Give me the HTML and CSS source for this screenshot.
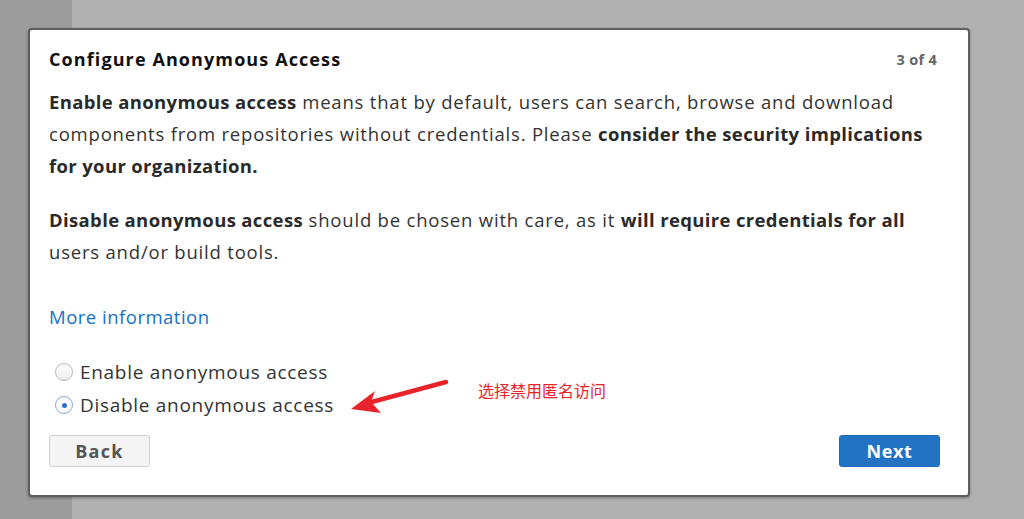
FILE: index.html
```html
<!DOCTYPE html>
<html>
<head>
<meta charset="utf-8">
<link rel="stylesheet" href="styles.css">
</head>
<body>
<div class="backdrop">
  <div class="side"></div>
  <div class="main"></div>
</div>
<div class="dialog">
  <div class="head">
    <h1 class="title">Configure Anonymous Access</h1>
    <span class="step">3 of 4</span>
  </div>
  <p class="para"><b>Enable anonymous access</b> means that by default, users can search, browse and download components from repositories without credentials. Please <b>consider the security implications for your organization.</b></p>
  <p class="para second"><b>Disable anonymous access</b> should be chosen with care, as it <b>will require credentials for all</b> users and/or build tools.</p>
  <a class="more" href="#">More information</a>
  <div class="options">
    <label class="opt"><span class="radio"></span>Enable anonymous access</label>
    <label class="opt"><span class="radio on"></span>Disable anonymous access</label>
  </div>
  <div class="actions">
    <button class="btn back">Back</button>
    <button class="btn next">Next</button>
  </div>
  <svg class="arrow" width="110" height="40" viewBox="0 0 110 40">
    <path d="M96 6 L18 27" stroke="#e8232a" stroke-width="4.5" stroke-linecap="round" fill="none"/>
    <path d="M1 33 L25 15 L21 26 L31 37 Z" fill="#e8232a"/>
  </svg>
  <span class="note">选择禁用匿名访问</span>
</div>
</body>
</html>
```
FILE: styles.css
```css
html, body { margin: 0; padding: 0; }
body { width: 1024px; height: 519px; overflow: hidden; font-family: "Open Sans", "Liberation Sans", sans-serif; position: relative; }
.backdrop { display: flex; height: 519px; }
.side { width: 72px; background: #9c9c9c; }
.main { flex: 1; background: #b1b1b1; }
.dialog {
  position: absolute; left: 28px; top: 28px; width: 900px; height: 448px;
  background: #fff; border: 2px solid #5f5f5f; border-radius: 4px;
  padding: 17px 19px 0 19px;
  box-shadow: 0 1px 3px rgba(0,0,0,.35);
  color: #333;
}
.head { display: flex; justify-content: space-between; align-items: center; height: 24px; padding-right: 12px; }
.title { margin: 0; font-size: 18px; font-weight: 700; color: #111; letter-spacing: 1.1px; }
.step { font-size: 14.5px; font-weight: 700; color: #666; letter-spacing: 0.3px; }
.para { margin: 15px 0 0; font-size: 18.5px; line-height: 32px; color: #333; letter-spacing: 0.8px; }
.para b { color: #2a2a2a; letter-spacing: 0.35px; }
.para.second { margin-top: 22px; }
.more { display: block; margin-top: 33px; font-size: 18.5px; color: #1a6fc4; text-decoration: none; line-height: 32px; letter-spacing: 0.5px; }
.options { margin-top: 23px; margin-left: 6px; display: flex; flex-direction: column; gap: 1px; }
.opt { display: flex; align-items: center; font-size: 19px; line-height: 32px; color: #333; letter-spacing: 0.7px; }
.radio { width: 18px; height: 18px; border: 1px solid #b9b9b9; border-radius: 50%; margin-right: 7px; box-sizing: border-box; background: linear-gradient(#fff, #eee); display: inline-block; position: relative; }
.radio.on { border-color: #7fa8d8; background: #fff; }
.radio.on::after { content: ""; position: absolute; left: 5.5px; top: 5.5px; width: 5px; height: 5px; border-radius: 50%; background: #2d6fbf; }
.actions { display: flex; justify-content: space-between; margin-top: 14px; padding-right: 9px; }
.btn { width: 101px; height: 32px; border-radius: 3px; font-family: inherit; font-size: 18px; font-weight: 700; cursor: pointer; letter-spacing: 0.6px; padding: 0; }
.back { background: #f4f4f4; border: 1px solid #d0d0d0; color: #555; letter-spacing: 1.3px; }
.next { background: #2373c4; border: 1px solid #1f6ab6; color: #fff; }
.arrow { position: absolute; left: 320px; top: 346px; }
.note { position: absolute; left: 448px; top: 348px; font-family: "Noto Sans CJK SC", sans-serif; font-size: 16px; color: #e8232a; }
```
